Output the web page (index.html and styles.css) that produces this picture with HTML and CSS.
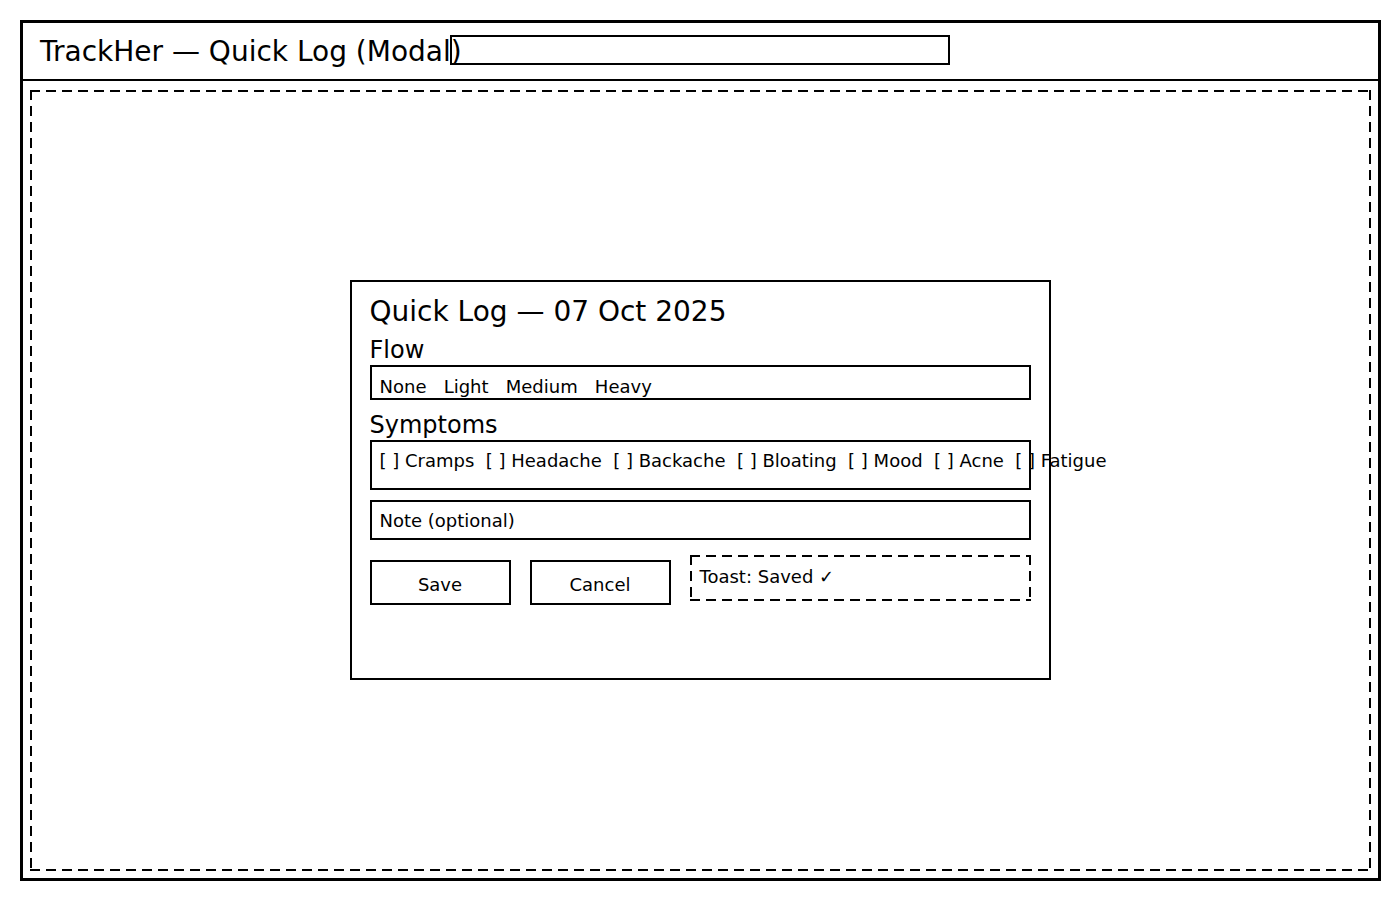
FILE: index.html
```html
<!DOCTYPE html>
<html lang="en">
<head>
<meta charset="utf-8">
<title>TrackHer — Quick Log (Modal)</title>
<link rel="stylesheet" href="styles.css">
</head>
<body>
<div class="frame">
  <header class="topbar">
    <div class="app-title">TrackHer — Quick Log (Modal)</div>
    <div class="search"></div>
  </header>
  <main class="stage">
    <div class="overlay dashed">
      <section class="modal">
        <h1 class="modal-title">Quick Log — 07 Oct 2025</h1>
        <div class="label label-flow">Flow</div>
        <div class="field field-flow">None   Light   Medium   Heavy</div>
        <div class="label label-symptoms">Symptoms</div>
        <div class="field field-symptoms">[ ] Cramps  [ ] Headache  [ ] Backache  [ ] Bloating  [ ] Mood  [ ] Acne  [ ] Fatigue</div>
        <div class="field field-note">Note (optional)</div>
        <div class="actions">
          <div class="btn">Save</div>
          <div class="btn">Cancel</div>
          <div class="toast dashed">Toast: Saved ✓</div>
        </div>
      </section>
    </div>
  </main>
</div>
</body>
</html>
```

FILE: styles.css
```css
* { box-sizing: border-box; }

html, body {
  margin: 0;
  padding: 0;
  background: #fff;
  color: #000;
  font-family: "DejaVu Sans", "Liberation Sans", sans-serif;
}

.frame {
  margin: 20px 0 0 20px;
  width: 1361px;
  height: 861px;
  border: 3px solid #000;
  display: flex;
  flex-direction: column;
}

.topbar {
  height: 58px;
  flex: none;
  border-bottom: 2px solid #000;
  display: flex;
  align-items: flex-start;
  padding: 0 0 0 17px;
}

.app-title {
  width: 410px;
  flex: none;
  white-space: nowrap;
  font-size: 28px;
  line-height: 28px;
  margin-top: 15px;
}

.search {
  width: 500px;
  height: 30px;
  margin-top: 12px;
  border: 2px solid #000;
}

.stage {
  flex: 1;
  padding: 9px 7px 7px 7px;
  display: flex;
}

/* dashed outline drawn with gradients: 10px dash, 6px gap */
.dashed {
  background:
    repeating-linear-gradient(90deg, #000 0 10px, transparent 10px 16px) left top / 100% 2px no-repeat,
    repeating-linear-gradient(90deg, #000 0 10px, transparent 10px 16px) left bottom / 100% 2px no-repeat,
    repeating-linear-gradient(180deg, #000 0 10px, transparent 10px 16px) left top / 2px 100% no-repeat,
    repeating-linear-gradient(180deg, #000 0 10px, transparent 10px 16px) right top / 2px 100% no-repeat;
}

.overlay {
  flex: 1;
  padding: 2px;
  display: flex;
  align-items: center;
  justify-content: center;
}

.modal {
  width: 701px;
  height: 400px;
  margin-left: -1px;
  margin-top: -1px;
  border: 2px solid #000;
  padding: 16px 18px 0 18px;
}

.modal-title {
  margin: 0;
  font-weight: normal;
  font-size: 28px;
  line-height: 28px;
}

.label {
  font-size: 24px;
  line-height: 24px;
}

.label-flow { margin-top: 12px; }
.label-symptoms { margin-top: 13px; }

.field {
  margin-top: 3px;
  width: 661px;
  border: 2px solid #000;
  font-size: 18px;
  line-height: 18px;
  white-space: pre;
  padding-left: 8px;
}

.field-flow {
  height: 35px;
  padding-top: 11px;
}

.field-symptoms {
  height: 50px;
  padding-top: 10px;
}

.field-note {
  margin-top: 10px;
  height: 40px;
  padding-top: 10px;
}

.actions {
  margin-top: 15px;
  display: flex;
  align-items: flex-start;
  gap: 20px;
}

.btn {
  margin-top: 5px;
  width: 141px;
  height: 45px;
  border: 2px solid #000;
  font-size: 18px;
  line-height: 18px;
  text-align: center;
  padding-top: 14px;
}

.btn + .btn { margin-left: -1px; }

.toast {
  width: 341px;
  height: 46px;
  margin-left: -1px;
  font-size: 18px;
  line-height: 18px;
  padding: 12.5px 0 0 10px;
}
```
